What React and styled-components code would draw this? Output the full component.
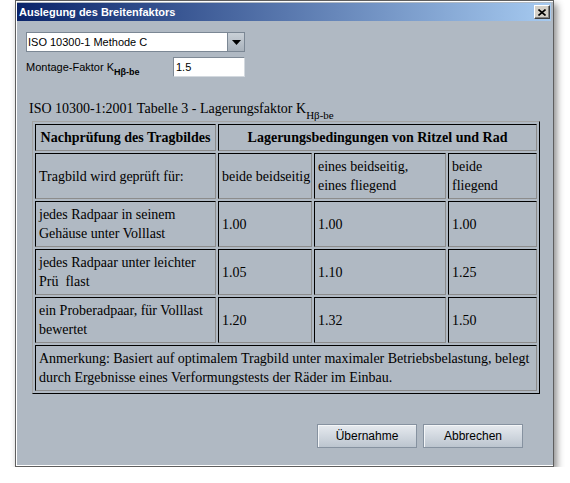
import React from "react";
import styled, { createGlobalStyle } from "styled-components";

const GlobalStyle = createGlobalStyle`
  html, body {
    margin: 0;
    padding: 0;
    background: #ffffff;
  }
  body {
    font-family: "Liberation Sans", Arial, sans-serif;
  }
`;

// Dialog frame
const Window = styled.div`
  box-sizing: border-box;
  width: 539px;
  height: 467px;
  margin-left: 15px;
  border: 1px solid #5e5e5e;
  background: #b0b9c3;
  box-shadow: inset 1px 1px 0 #ffffff, inset 0 -1px 0 #ffffff,
    3px 4px 7px rgba(0, 0, 0, 0.45);
  display: flex;
  flex-direction: column;
`;

const TitleBar = styled.div`
  height: 18px;
  margin: 2px 2px 0 1px;
  padding: 0 1px 0 2px;
  background: linear-gradient(to right, #0a246a, #a6caf0);
  display: flex;
  align-items: center;
  justify-content: space-between;
`;

const Title = styled.span`
  color: #ffffff;
  font: bold 11px "Liberation Sans", Arial, sans-serif;
`;

const CloseButton = styled.div`
  box-sizing: border-box;
  width: 16px;
  height: 14px;
  background: #d4d0c8;
  border: 1px solid;
  border-color: #ffffff #404040 #404040 #ffffff;
  box-shadow: inset -1px -1px 0 #808080;
  display: flex;
  align-items: center;
  justify-content: center;
`;

const Body = styled.div`
  flex: 1;
  display: flex;
  flex-direction: column;
  padding: 11px 30px 18px 10px;
`;

// Combo box
const Combo = styled.div`
  box-sizing: border-box;
  width: 219px;
  height: 20px;
  display: flex;
  border: 1px solid #7b8794;
  background: #ffffff;
`;

const ComboText = styled.div`
  flex: 1;
  display: flex;
  align-items: center;
  padding-left: 1px;
  font-size: 11px;
  color: #000;
`;

const ComboArrow = styled.div`
  width: 16px;
  border-left: 1px solid #7b8794;
  background: linear-gradient(#c9d0d7, #a9b2bc);
  display: flex;
  align-items: center;
  justify-content: center;
`;

const FieldRow = styled.div`
  display: flex;
  align-items: center;
  margin-top: 5px;
  height: 20px;
`;

const FieldLabel = styled.div`
  width: 147px;
  font-size: 11px;
  color: #000;
  white-space: nowrap;
`;

const SmallSub = styled.span`
  font-size: 9px;
  font-weight: bold;
  vertical-align: -4px;
  line-height: 0;
`;

const TextInput = styled.div`
  box-sizing: border-box;
  width: 72px;
  height: 20px;
  border: 1px solid;
  border-color: #7f8a96 #d3d9df #d3d9df #7f8a96;
  background: #ffffff;
  display: flex;
  align-items: center;
  padding-left: 2px;
  font-size: 11px;
`;

const Heading = styled.div`
  margin-top: 22px;
  padding-left: 3px;
  font: 14px/19px "Liberation Serif", "Times New Roman", serif;
  color: #000;
`;

const SerifSub = styled.span`
  font-size: 11px;
  vertical-align: -6px;
  line-height: 0;
`;

// HTML-style table with border=1
const Table = styled.table`
  margin: 3px 0 0 6px;
  width: 508px;
  table-layout: fixed;
  border-collapse: separate;
  border-spacing: 2px;
  border: 1px solid;
  border-color: #a4a4a4 #000000 #000000 #a4a4a4;
`;

const Cell = styled.td`
  border: 1px solid;
  border-color: #000000 #8c8c8c #8c8c8c #000000;
  padding: 3px;
  font: ${(p) => (p.$bold ? "bold " : "")}14px/19px "Liberation Serif",
    "Times New Roman", serif;
  text-align: ${(p) => (p.$center ? "center" : "left")};
  white-space: ${(p) => (p.$nowrap ? "nowrap" : "normal")};
  vertical-align: middle;
  color: #000;
`;

const ButtonRow = styled.div`
  margin-top: auto;
  display: flex;
  justify-content: flex-end;
  gap: 6px;
`;

const Button = styled.button`
  box-sizing: border-box;
  width: 100px;
  height: 24px;
  padding: 0;
  font: 12px "Liberation Sans", Arial, sans-serif;
  color: #000;
  border: 1px solid #8692a0;
  background: linear-gradient(#e6eaef, #bcc5cf);
  box-shadow: inset 1px 1px 0 #f4f6f8;
`;

const rows = [
  { label: ["jedes Radpaar in seinem", "Gehäuse unter Volllast"], values: ["1.00", "1.00", "1.00"] },
  { label: ["jedes Radpaar unter leichter", "Prü\u00a0\u00a0flast"], values: ["1.05", "1.10", "1.25"] },
  { label: ["ein Proberadpaar, für Volllast", "bewertet"], values: ["1.20", "1.32", "1.50"] },
];

export default function App() {
  return (
    <>
      <GlobalStyle />
      <Window>
        <TitleBar>
          <Title>Auslegung des Breitenfaktors</Title>
          <CloseButton>
            <svg width="8" height="7" viewBox="0 0 8 7">
              <path d="M0.5 0.5 L7.5 6.5 M7.5 0.5 L0.5 6.5" stroke="#000" strokeWidth="1.6" />
            </svg>
          </CloseButton>
        </TitleBar>
        <Body>
          <Combo>
            <ComboText>ISO 10300-1 Methode C</ComboText>
            <ComboArrow>
              <svg width="9" height="5" viewBox="0 0 9 5">
                <path d="M0 0 H9 L4.5 5 Z" fill="#000" />
              </svg>
            </ComboArrow>
          </Combo>
          <FieldRow>
            <FieldLabel>
              Montage-Faktor K<SmallSub>Hβ-be</SmallSub>
            </FieldLabel>
            <TextInput>1.5</TextInput>
          </FieldRow>
          <Heading>
            ISO 10300-1:2001 Tabelle 3 - Lagerungsfaktor K<SerifSub>Hβ-be</SerifSub>
          </Heading>
          <Table>
            <colgroup>
              <col style={{ width: 181 }} />
              <col style={{ width: 94 }} />
              <col style={{ width: 132 }} />
              <col style={{ width: 89 }} />
            </colgroup>
            <tbody>
              <tr>
                <Cell $bold $center>Nachprüfung des Tragbildes</Cell>
                <Cell $bold $center colSpan={3}>
                  Lagerungsbedingungen von Ritzel und Rad
                </Cell>
              </tr>
              <tr>
                <Cell>Tragbild wird geprüft für:</Cell>
                <Cell $nowrap>beide beidseitig</Cell>
                <Cell>
                  eines beidseitig,
                  <br />
                  eines fliegend
                </Cell>
                <Cell>
                  beide
                  <br />
                  fliegend
                </Cell>
              </tr>
              {rows.map((r, i) => (
                <tr key={i}>
                  <Cell>
                    {r.label[0]}
                    <br />
                    {r.label[1]}
                  </Cell>
                  {r.values.map((v, j) => (
                    <Cell key={j}>{v}</Cell>
                  ))}
                </tr>
              ))}
              <tr>
                <Cell colSpan={4}>
                  Anmerkung: Basiert auf optimalem Tragbild unter maximaler Betriebsbelastung, belegt
                  <br />
                  durch Ergebnisse eines Verformungstests der Räder im Einbau.
                </Cell>
              </tr>
            </tbody>
          </Table>
          <ButtonRow>
            <Button>Übernahme</Button>
            <Button>Abbrechen</Button>
          </ButtonRow>
        </Body>
      </Window>
    </>
  );
}
